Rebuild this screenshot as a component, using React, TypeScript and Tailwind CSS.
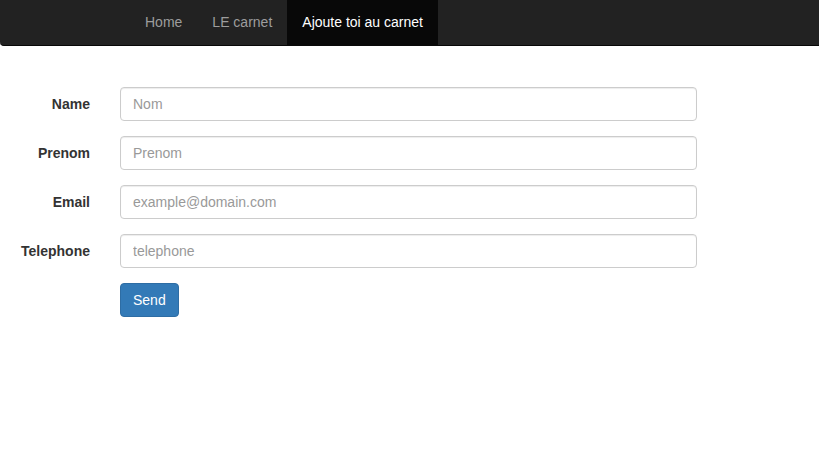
export default function App() {
  const fields = [
    { label: 'Name', placeholder: 'Nom', type: 'text' },
    { label: 'Prenom', placeholder: 'Prenom', type: 'text' },
    { label: 'Email', placeholder: 'example@domain.com', type: 'email' },
    { label: 'Telephone', placeholder: 'telephone', type: 'text' },
  ]

  return (
    <div className="min-h-[467px] bg-white text-[14px] text-[#333] font-['Liberation_Sans',Arial,sans-serif]">
      <nav className="h-[46px] bg-[#222] border-b border-[#080808] rounded-bl-[4px] flex pl-[130px]">
        <a className="h-[45px] px-[15px] flex items-center text-[#9d9d9d]">Home</a>
        <a className="h-[45px] px-[15px] flex items-center text-[#9d9d9d]">LE carnet</a>
        <a className="h-[45px] px-[15px] flex items-center bg-[#080808] text-white">Ajoute toi au carnet</a>
      </nav>

      <form className="pt-[41px] flex flex-col gap-[15px]">
        {fields.map((f) => (
          <div key={f.label} className="flex items-center">
            <label className="w-[90px] text-right font-bold">{f.label}</label>
            <input
              type={f.type}
              placeholder={f.placeholder}
              className="ml-[30px] w-[577px] h-[34px] px-3 border border-[#ccc] rounded-[4px] text-[14px] text-[#555] placeholder:text-[#999] shadow-[inset_0_1px_1px_rgba(0,0,0,0.075)] focus:outline-none"
            />
          </div>
        ))}
        <div className="pl-[120px]">
          <button
            type="button"
            className="h-[34px] px-3 bg-[#337ab7] border border-[#2e6da4] rounded-[4px] text-white"
          >
            Send
          </button>
        </div>
      </form>
    </div>
  )
}
